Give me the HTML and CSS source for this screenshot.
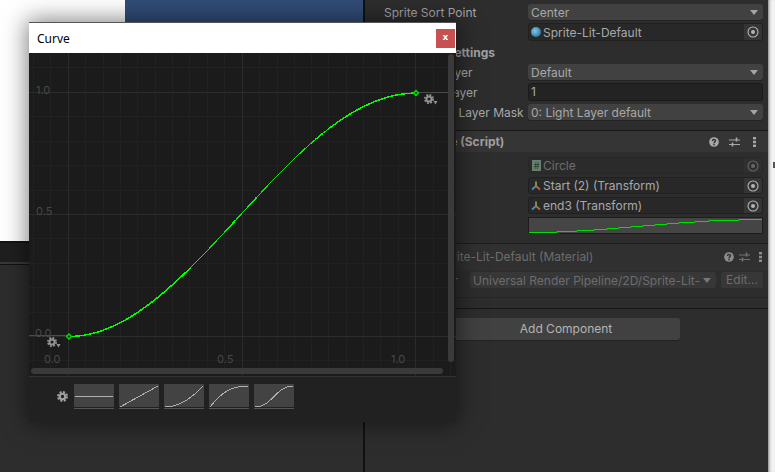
FILE: index.html
```html
<!DOCTYPE html>
<html lang="en">
<head>
<meta charset="utf-8">
<title>Curve</title>
<link rel="stylesheet" href="styles.css">
</head>
<body>
<svg class="defs" width="0" height="0" aria-hidden="true">
  <symbol id="gear" viewBox="0 0 12 12">
    <circle cx="6" cy="6" r="3" fill="none" stroke="currentColor" stroke-width="2.4"/>
    <circle cx="6" cy="6" r="4.9" fill="none" stroke="currentColor" stroke-width="2.2" stroke-dasharray="2.2 1.65"/>
  </symbol>
  <symbol id="target" viewBox="0 0 12 12">
    <circle cx="6" cy="6" r="5" fill="none" stroke="currentColor" stroke-width="1.1"/>
    <circle cx="6" cy="6" r="2" fill="currentColor"/>
  </symbol>
  <symbol id="axes" viewBox="0 0 10 10">
    <path d="M5 0.5V5" stroke="#6fb04a" stroke-width="1.7" fill="none"/>
    <path d="M5 5L1 8.5" stroke="#4a90c0" stroke-width="1.7" fill="none"/>
    <path d="M5 5L9 8.5" stroke="#d0603a" stroke-width="1.7" fill="none"/>
  </symbol>
  <symbol id="help" viewBox="0 0 12 12">
    <circle cx="6" cy="6" r="5.8" fill="currentColor"/>
    <path d="M4.1 4.7C4.1 2.5 7.9 2.5 7.9 4.6C7.9 6 6 5.8 6 7.4" fill="none" stroke="#333" stroke-width="1.6"/>
    <rect x="5.1" y="8.2" width="1.8" height="1.8" fill="#333"/>
  </symbol>
  <symbol id="sliders" viewBox="0 0 11 10">
    <path d="M0 3H11M0 7.5H11" stroke="currentColor" stroke-width="1"/>
    <path d="M7.5 0.5V4.5M3.5 5.5V9.5" stroke="currentColor" stroke-width="1.6"/>
  </symbol>
  <symbol id="kebab" viewBox="0 0 3 10">
    <rect x="0" y="0" width="3" height="2.4" fill="currentColor"/>
    <rect x="0" y="3.8" width="3" height="2.4" fill="currentColor"/>
    <rect x="0" y="7.6" width="3" height="2.4" fill="currentColor"/>
  </symbol>
</svg>

<div class="desktop">
  <div class="editor">
    <main class="left">
      <div class="views">
        <div class="paper"></div>
        <div class="scene"></div>
      </div>
      <div class="toolbar"></div>
    </main>

    <aside class="inspector">
      <div class="row row-first">
        <span class="label">Sprite Sort Point</span>
        <div class="dropdown">Center</div>
      </div>
      <div class="row">
        <span class="label"></span>
        <div class="objfield">
          <span class="sphere"></span><span class="objname">Sprite-Lit-Default</span>
          <span class="pick"><svg class="ico12"><use href="#target"/></svg></span>
        </div>
      </div>
      <div class="subhead">Additional Settings</div>
      <div class="row row-after-head">
        <span class="label label-in">Sorting Layer</span>
        <div class="dropdown">Default</div>
      </div>
      <div class="row">
        <span class="label label-in">Order in Layer</span>
        <div class="numfield">1</div>
      </div>
      <div class="row">
        <span class="label label-in">Rendering Layer Mask</span>
        <div class="dropdown">0: Light Layer default</div>
      </div>

      <section class="component comp-script">
        <header class="comphead">
          <span class="compname">Bezier Curve (Script)</span>
          <svg class="ic-help"><use href="#help"/></svg>
          <svg class="ic-sliders"><use href="#sliders"/></svg>
          <svg class="ic-kebab"><use href="#kebab"/></svg>
        </header>
        <div class="fields">
          <div class="objfield disabled">
            <span class="script-ico">#</span><span class="objname">Circle</span>
            <span class="pick"><svg class="ico12"><use href="#target"/></svg></span>
          </div>
          <div class="objfield">
            <svg class="obj-ico"><use href="#axes"/></svg><span class="objname">Start (2) (Transform)</span>
            <span class="pick"><svg class="ico12"><use href="#target"/></svg></span>
          </div>
          <div class="objfield">
            <svg class="obj-ico"><use href="#axes"/></svg><span class="objname">end3 (Transform)</span>
            <span class="pick"><svg class="ico12"><use href="#target"/></svg></span>
          </div>
          <svg class="curvefield" viewBox="0 0 233 15" preserveAspectRatio="none">
            <path d="M0 14.5H28V13.5H48V12.5H65V11.5H78V10.5H90V9.5H102V8.5H114V7.5H126V6.5H138V5.5H150V4.5H166V3.5H180V2.5H210V1.5H233" fill="none" stroke="#00e000" stroke-width="1"/>
          </svg>
        </div>
      </section>

      <section class="component comp-material">
        <header class="comphead comphead-dim">
          <span class="matname">Sprite-Lit-Default (Material)</span>
          <svg class="ic-help"><use href="#help"/></svg>
          <svg class="ic-sliders"><use href="#sliders"/></svg>
          <svg class="ic-kebab"><use href="#kebab"/></svg>
        </header>
        <div class="shaderrow">
          <span class="shaderlabel">Shader</span>
          <div class="dropdown dropdown-dim">Universal Render Pipeline/2D/Sprite-Lit-</div>
          <div class="editbtn">Edit...</div>
        </div>
      </section>

      <div class="addrow">
        <div class="addbtn">Add Component</div>
      </div>
    </aside>

    <div class="edge"><i></i></div>
  </div>

  <section class="curve-window">
    <header class="titlebar">
      <span>Curve</span>
      <button class="close" type="button">x</button>
    </header>
    <div class="graph">
      <svg class="plot" viewBox="29 53 427 323" width="427" height="323">
        <path class="grid-minor" d="M33.5 53V376M50.5 53V376M85.5 53V376M103.5 53V376M120.5 53V376M137.5 53V376M155.5 53V376M172.5 53V376M189.5 53V376M207.5 53V376M224.5 53V376M259.5 53V376M277.5 53V376M294.5 53V376M311.5 53V376M328.5 53V376M346.5 53V376M363.5 53V376M380.5 53V376M398.5 53V376M433.5 53V376M450.5 53V376M29 67.5H456M29 116.5H456M29 141.5H456M29 165.5H456M29 190.5H456M29 238.5H456M29 263.5H456M29 287.5H456M29 312.5H456M29 360.5H456"/>
        <path class="grid-major" d="M68.5 53V376M242.5 53V376M415.5 53V376M29 92.5H456M29 214.5H456M29 336.5H456"/>
        <path class="axis" d="M29 335.5H69M416 92.5H456"/>
        <text class="tick" x="36" y="94">1.0</text>
        <text class="tick" x="36" y="215">0.5</text>
        <text class="tick" x="35" y="337">0.0</text>
        <text class="tick" x="44" y="363">0.0</text>
        <text class="tick" x="217" y="363">0.5</text>
        <text class="tick" x="391" y="363">1.0</text>
        <path class="curve" d="M69 336.5C190 336.5 290 93 416 93"/>
        <path class="curve-thick" pathLength="100" d="M69 336.5C190 336.5 290 93 416 93"/>
        <path class="key" d="M69 334L71.5 336.5L69 339L66.5 336.5Z"/>
        <path class="key" d="M416 90.5L418.5 93L416 95.5L413.5 93Z"/>
        <use href="#gear" x="47" y="337" width="10" height="10" class="gear-plot"/>
        <path class="gear-drop" d="M56.5 344H60.5L58.5 347.5Z"/>
        <use href="#gear" x="424" y="94" width="10" height="10" class="gear-plot"/>
        <path class="gear-drop" d="M433.5 101H437.5L435.5 104.5Z"/>
      </svg>
      <div class="vscroll"></div>
      <div class="hscroll"></div>
    </div>
    <footer class="presets">
      <svg class="preset-gear"><use href="#gear"/></svg>
      <svg class="preset" viewBox="0 0 40 25"><path d="M1 12.5H39"/></svg>
      <svg class="preset" viewBox="0 0 40 25"><path d="M1 23L39 2"/></svg>
      <svg class="preset" viewBox="0 0 40 25"><path d="M1 23C16 23 28 14 39 2"/></svg>
      <svg class="preset" viewBox="0 0 40 25"><path d="M1 23C12 9 22 2 39 2"/></svg>
      <svg class="preset" viewBox="0 0 40 25"><path d="M1 23C18 23 22 2 39 2"/></svg>
    </footer>
  </section>
</div>
</body>
</html>
```

FILE: styles.css
```css
* { box-sizing: border-box; }

html, body {
  margin: 0;
  height: 100%;
  background: #2d2d2d;
}

.defs { position: absolute; }

.desktop {
  position: relative;
  width: 775px;
  height: 472px;
  overflow: hidden;
  font-family: Inter, "Liberation Sans", sans-serif;
  font-size: 12px;
  color: #a8a8a8;
}

.editor {
  display: grid;
  grid-template-columns: 365px 403px 7px;
  height: 100%;
}

/* left side of the editor */
.left {
  display: flex;
  flex-direction: column;
  border-right: 2px solid #111;
  background: #2d2d2d;
}

.views {
  display: flex;
  height: 241px;
}

.paper { width: 125px; background: #fff; }
.scene { flex: 1; background: #314c76; }

.toolbar {
  height: 24px;
  background: #1f1f1f;
  border-top: 2px solid #141414;
  box-shadow: inset 0 -3px 0 -1px #383838;
  border-bottom: 1px solid #111;
}

/* inspector */
.inspector {
  display: flex;
  flex-direction: column;
  background: #2d2d2d;
  padding-top: 4px;
}

.row {
  display: flex;
  align-items: center;
  margin-top: 3px;
  padding-right: 5px;
}

.row-first { margin-top: 0; }
.row-after-head { margin-top: 2px; }

.label {
  flex: none;
  width: 163px;
  padding-left: 19px;
  white-space: nowrap;
  overflow: hidden;
}

.label-in { padding-left: 32px; }

.dropdown {
  flex: 1;
  display: flex;
  align-items: center;
  justify-content: space-between;
  height: 16px;
  padding: 0 5px 0 3px;
  background: #414141;
  border-radius: 3px;
  box-shadow: 0 1px 0 #232323;
  white-space: nowrap;
}

.dropdown::after {
  content: "";
  flex: none;
  border-left: 4px solid transparent;
  border-right: 4px solid transparent;
  border-top: 5px solid #a4a4a4;
}

.numfield {
  flex: 1;
  height: 18px;
  line-height: 16px;
  padding-left: 2px;
  background: #232323;
  border: 1px solid #1a1a1a;
  border-radius: 3px;
}

.objfield {
  flex: 1;
  display: flex;
  align-items: center;
  height: 18px;
  padding-left: 2px;
  background: #282828;
  border: 1px solid #202020;
  border-radius: 3px;
  overflow: hidden;
}

.objname { flex: 1; white-space: nowrap; }

.pick {
  flex: none;
  display: flex;
  align-items: center;
  justify-content: center;
  width: 18px;
  height: 100%;
  background: #353535;
  color: #b4b4b4;
}

.sphere {
  flex: none;
  width: 10px;
  height: 10px;
  margin-right: 2px;
  border-radius: 50%;
  background: radial-gradient(circle at 40% 40%, #7fc6e8, #2f7aa5 75%);
}

.ico12 { width: 12px; height: 12px; flex: none; }

.obj-ico { width: 10px; height: 10px; flex: none; margin-right: 2px; }

.subhead {
  height: 19px;
  margin-top: 2px;
  padding-left: 19px;
  line-height: 19px;
  font-weight: 700;
  color: #a0a0a0;
}

.component { border-top: 1px solid #191919; }

.comp-script { margin-top: 10px; height: 113px; }

.comphead {
  display: flex;
  align-items: center;
  height: 21px;
  padding: 0 12px 0 17px;
  background: #353535;
  color: #a0a0a0;
}

.compname { flex: 1; font-weight: 700; white-space: nowrap; }

.ic-help { width: 10px; height: 10px; flex: none; color: #a8a8a8; }
.ic-sliders { width: 11px; height: 10px; flex: none; margin-left: 10px; color: #a8a8a8; }
.ic-kebab { width: 3px; height: 10px; flex: none; margin-left: 13px; color: #a8a8a8; }

.fields {
  display: flex;
  flex-direction: column;
  gap: 3px;
  margin-top: 5px;
  padding: 0 5px 0 163px;
}

.fields .objfield { flex: none; height: 17px; }

.disabled { color: #6e6e6e; background: #2b2b2b; border-color: #272727; }
.disabled .pick { background: #2f2f2f; color: #666; }

.script-ico {
  flex: none;
  width: 9px;
  height: 11px;
  margin: 0 2px 0 1px;
  background: #66806d;
  color: #2c3a30;
  font-size: 9px;
  line-height: 11px;
  text-align: center;
}

.curvefield {
  flex: none;
  width: 100%;
  height: 17px;
  background: #454545;
  border: 1px solid #1c1c1c;
}

.comp-material {
  height: 55px;
  border-top: 1px solid #1c1c1c;
  border-bottom: 1px solid #262626;
}

.comphead-dim {
  background: #303030;
  color: #6d6d6d;
  height: 27px;
  padding: 0 6px 2px 72px;
}

.comphead-dim .ic-help { color: #8c8c8c; }
.comphead-dim .ic-sliders { color: #707070; margin-left: 5px; }
.comphead-dim .ic-kebab { color: #8c8c8c; margin-left: 9px; }

.matname { flex: 1; white-space: nowrap; }

.shaderrow {
  display: flex;
  align-items: center;
  gap: 5px;
  height: 16px;
  margin-top: 1px;
  padding: 0 5px 0 17px;
  color: #6d6d6d;
}

.shaderlabel {
  flex: none;
  width: 83px;
  padding-right: 12px;
  text-align: right;
  margin-right: -5px;
  margin-left: 5px;
}

.dropdown-dim {
  background: #373737;
  color: #6d6d6d;
  box-shadow: none;
  overflow: hidden;
}

.dropdown-dim::after { border-top-color: #787878; }

.editbtn {
  flex: none;
  width: 42px;
  height: 16px;
  line-height: 15px;
  text-align: center;
  background: #373737;
  border-radius: 2px;
  white-space: nowrap;
}

.addrow {
  border-top: 1px solid #161616;
  padding: 9px 0 0 87px;
  margin-top: 10px;
}

.addbtn {
  width: 228px;
  height: 22px;
  line-height: 21px;
  text-align: center;
  background: #414141;
  border-radius: 3px;
  box-shadow: 0 1px 0 #232323;
  color: #b4b4b4;
}

.edge {
  background: #f2f2f2;
  box-shadow: inset 3px 0 3px -2px #777;
}

.edge i {
  display: block;
  width: 2px;
  height: 6px;
  margin: 162px 0 0 5px;
  background: #555;
}

/* floating curve window */
.curve-window {
  position: absolute;
  left: 29px;
  top: 22px;
  width: 427px;
  background: #212121;
  box-shadow: 0 0 22px 2px rgba(0, 0, 0, 0.5);
  border-top: 1px solid #555;
}

.titlebar {
  display: flex;
  align-items: center;
  justify-content: space-between;
  height: 30px;
  padding: 0 1px 0 8px;
  background: #fff;
  color: #000;
  font-family: "Noto Sans", "Liberation Sans", sans-serif;
  font-size: 12px;
}

.close {
  width: 19px;
  height: 19px;
  padding: 0 0 2px;
  border: 0;
  background: #c75050;
  color: #fff;
  font-family: "DejaVu Sans", sans-serif;
  font-size: 9px;
  font-weight: 700;
}

.graph {
  position: relative;
  height: 323px;
  background: #1b1b1b;
}

.plot { display: block; }

.grid-minor { stroke: #212121; stroke-width: 1; fill: none; }
.grid-major { stroke: #2b2b2b; stroke-width: 1; fill: none; }
.axis { stroke: #4a4a4a; stroke-width: 1; fill: none; }

.tick {
  fill: #484848;
  font-family: Inter, "Liberation Sans", sans-serif;
  font-size: 11px;
}

.curve { fill: none; stroke: #1fe01f; stroke-width: 1; shape-rendering: crispEdges; }

.curve-thick {
  fill: none;
  stroke: #00ff00;
  stroke-width: 1.5;
  stroke-dasharray: 33 12 3 4 3 14 2 3 2 2 50;
  shape-rendering: crispEdges;
}

.key { fill: #083a08; stroke: #00e800; stroke-width: 1.3; }

.gear-plot { color: #929292; }
.gear-drop { fill: #929292; }

.vscroll {
  position: absolute;
  left: 419px;
  top: 1px;
  width: 6px;
  height: 308px;
  background: #3a3a3a;
  border-radius: 3px;
}

.hscroll {
  position: absolute;
  left: 2px;
  top: 315px;
  width: 412px;
  height: 6px;
  background: #3a3a3a;
  border-radius: 3px;
}

.presets {
  display: flex;
  align-items: center;
  gap: 5px;
  height: 46px;
  padding: 0 0 6px 28px;
  border-top: 1px solid #333;
}

.preset-gear {
  width: 11px;
  height: 11px;
  margin-right: 1px;
  color: #a0a0a0;
}

.preset {
  width: 40px;
  height: 25px;
  background: linear-gradient(#434343 23px, #212121 23px, #212121 24px, #555 24px);
}

.preset path { fill: none; stroke: #b0b0b0; stroke-width: 1; shape-rendering: crispEdges; }
```
